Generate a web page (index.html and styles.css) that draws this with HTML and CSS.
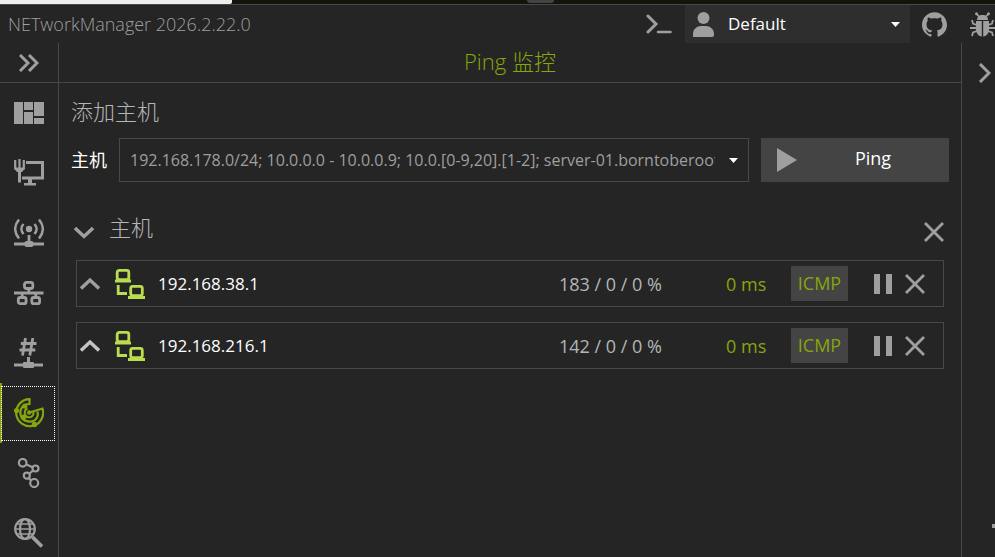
FILE: index.html
```
<!DOCTYPE html>
<html lang="zh-CN">
<head>
  <meta charset="UTF-8">
  <meta name="viewport" content="width=device-width, initial-scale=1.0">
  <title>NETworkManager</title>
  <link rel="stylesheet" href="styles.css">
</head>
<body>
  <div class="desktop-strip">
    <div class="desktop-light"></div>
    <div class="desktop-dark"><span class="desktop-tab"></span></div>
  </div>

  <!-- Title bar -->
  <header class="titlebar">
    <span class="app-title">NETworkManager 2026.2.22.0</span>
    <button type="button" class="icon-btn terminal-btn" aria-label="Terminal">
      <svg width="26" height="20" viewBox="0 0 26 20" fill="none" stroke="currentColor" stroke-width="3" stroke-linecap="round"><path d="M2 2l8 8-8 8" stroke-linejoin="miter"/><path d="M12 18h12.500" stroke-width="2.500"/></svg>
    </button>
    <div class="profile">
      <svg width="22" height="25" viewBox="0 0 22 25" fill="currentColor"><circle cx="10.500" cy="6" r="6"/><path d="M0 25v-3c0-5 4-8 8-8h5c4 0 8 3 8 8v1c0 1-1 2-2 2z"/></svg>
      <select class="profile-select" aria-label="Profile">
        <option>Default</option>
      </select>
      <svg class="profile-caret" width="9" height="5" viewBox="0 0 9 5" fill="#fff"><path d="M0 0h9L4.500 5z"/></svg>
    </div>
    <a href="#" class="icon-btn github-link" aria-label="GitHub">
      <svg width="25" height="25" viewBox="0 0 24 24" fill="currentColor"><path d="M12 .297c-6.630 0-12 5.373-12 12 0 5.303 3.438 9.800 8.205 11.385.6.113.82-.258.82-.577 0-.285-.01-1.040-.015-2.040-3.338.724-4.042-1.610-4.042-1.610C4.422 18.070 3.633 17.700 3.633 17.700c-1.087-.744.084-.729.084-.729 1.205.084 1.838 1.236 1.838 1.236 1.070 1.835 2.809 1.305 3.495.998.108-.776.417-1.305.76-1.605-2.665-.3-5.466-1.332-5.466-5.930 0-1.310.465-2.380 1.235-3.220-.135-.303-.54-1.523.105-3.176 0 0 1.005-.322 3.300 1.230.96-.267 1.980-.399 3-.405 1.020.006 2.040.138 3 .405 2.280-1.552 3.285-1.230 3.285-1.230.645 1.653.24 2.873.12 3.176.765.84 1.230 1.910 1.230 3.220 0 4.610-2.805 5.625-5.475 5.920.42.36.81 1.096.81 2.220 0 1.606-.015 2.896-.015 3.286 0 .315.21.69.825.57C20.565 22.092 24 17.592 24 12.297c0-6.627-5.373-12-12-12"/></svg>
    </a>
    <a href="#" class="icon-btn bug-link" aria-label="Report a bug">
      <svg width="25" height="25" viewBox="0 0 25 25"><g fill="currentColor"><path d="M7 8c0-3 2-5 5.500-5S18 5 18 8z"/><path d="M6 9h5.800v15.500C8 24 6 21 6 17z"/><path d="M19 9h-5.800v15.500C17 24 19 21 19 17z"/><circle cx="6.500" cy="1.800" r="1.500"/><circle cx="18.500" cy="1.800" r="1.500"/></g><path d="M6.500 1.800L9.500 5M18.500 1.800L15.500 5M6.500 13L3 11.500 2 8M18.500 13l3.500-1.500 1-3.500M6 16H0M19 16h6M7 19l-4 1.500L2 24M18 19l4 1.500 1 3.500" fill="none" stroke="currentColor" stroke-width="1.800"/></svg>
    </a>
  </header>

  <div class="window-body">
    <!-- Application list -->
    <nav class="sidebar">
      <button type="button" class="expand-btn" aria-label="Expand">
        <svg width="20" height="18" viewBox="0 0 20 18" fill="none" stroke="currentColor" stroke-width="3"><path d="M1 1l8 8-8 8M10 1l8 8-8 8"/></svg>
      </button>
      <a href="#" class="nav-item" aria-label="Dashboard">
        <svg width="30" height="30" viewBox="0 0 30 30" fill="currentColor"><path d="M0 4h9v22H0zM10 4h9v8h-9zM10 14h9v12h-9zM20 4h10v14H20zM20 20h10v6H20z"/></svg>
      </a>
      <a href="#" class="nav-item" aria-label="Network interface">
        <svg width="30" height="30" viewBox="0 0 30 30" fill="none" stroke="currentColor"><path d="M1.200 2v8.500h8.600V2M5.500 1v9" stroke-width="2.200"/><path d="M0 10.500h11l-3 3.500H3z" fill="currentColor" stroke="none"/><path d="M5.500 12v12.500" stroke-width="3"/><path d="M12 4.500h16.500v15.500H8" stroke-width="3"/><path d="M14 21h4v4h4v2.500H10V25h4z" fill="currentColor" stroke="none"/></svg>
      </a>
      <a href="#" class="nav-item" aria-label="WiFi">
        <svg width="30" height="30" viewBox="0 0 30 30" fill="none" stroke="currentColor" stroke-width="2.600"><circle cx="15" cy="11" r="3.200" fill="currentColor" stroke="none"/><path d="M9.500 6c-2.700 3-2.700 7 0 10M20.500 6c2.700 3 2.700 7 0 10M5 1.500c-5 6-5 13 0 19M25 1.500c5 6 5 13 0 19"/><path d="M15 17V25" stroke-width="2.800"/><path d="M0 26h30" stroke-width="3"/><rect x="10.500" y="23" width="9" height="6" rx="2" fill="currentColor" stroke="none"/></svg>
      </a>
      <a href="#" class="nav-item" aria-label="IP scanner">
        <svg width="30" height="30" viewBox="0 0 30 30" fill="none" stroke="currentColor" stroke-width="2.800"><rect x="10.500" y="4.300" width="8.300" height="6.200" rx="2"/><rect x="4.300" y="19.500" width="7.800" height="6.200" rx="2"/><rect x="17.800" y="19.500" width="7.800" height="6.200" rx="2"/><path d="M0 15h29.500M14.800 11v4M8.200 15V19M21.800 15V19"/></svg>
      </a>
      <a href="#" class="nav-item" aria-label="Port scanner">
        <svg width="30" height="30" viewBox="0 0 30 30" fill="none" stroke="currentColor" stroke-width="2.800"><path d="M11.500 0L8.500 17.500M18.800 0l-3 17.500M6.800 5.500h15.700M5.500 12h15.800"/><path d="M14.500 19v6M0 27h29" stroke-width="3"/><rect x="9" y="24" width="11" height="6" rx="1" fill="currentColor" stroke="none"/></svg>
      </a>
      <a href="#" class="nav-item active" aria-label="Ping monitor">
        <svg width="30" height="30" viewBox="0 0 30 30" fill="none" stroke="currentColor" stroke-width="2.200"><path d="M15.500 7V1.200A13.500 13.500 0 1 0 28.500 10.500L15.500 14.500"/><path d="M15.500 6C8 6 5.500 12 6.500 16.500c1.500 8 13 9.500 16.500 3 1-2 1-4 .5-6"/><path d="M13.500 10.500c-4 1.500-3.500 8 .5 8.700 3 .6 6-1.500 5.500-5.200" stroke-width="2"/><path d="M15.500 7l9-3.500 3.500 7" stroke="none"/><g fill="currentColor" stroke="none"><circle cx="15.200" cy="14.500" r="2.200"/><circle cx="2.500" cy="12.500" r="2.600"/><circle cx="10.800" cy="8" r="2.600"/><circle cx="9.500" cy="19.200" r="2.600"/><circle cx="20.500" cy="26.500" r="2.700"/></g></svg>
      </a>
      <a href="#" class="nav-item" aria-label="Traceroute">
        <svg width="30" height="30" viewBox="0 0 30 30" fill="none" stroke="currentColor" stroke-width="2.200"><circle cx="8.700" cy="4.800" r="3.800"/><circle cx="21.500" cy="10.500" r="3"/><circle cx="12.800" cy="17.700" r="3"/><circle cx="20.200" cy="25" r="4"/><path d="M12.500 6.500l6 2.700M19.200 12.500l-4.200 3.400M14.500 20l2.800 2.600"/></svg>
      </a>
      <a href="#" class="nav-item" aria-label="DNS lookup">
        <svg width="30" height="30" viewBox="0 0 30 30" fill="none" stroke="currentColor" stroke-width="2.200"><circle cx="11" cy="11" r="9.800"/><ellipse cx="11" cy="11" rx="5" ry="10"/><path d="M1 11h20M3 6h16M3 16h16" stroke-width="1.600"/><path d="M18.500 19l9.500 9.500" stroke-width="3.800"/></svg>
      </a>
    </nav>

    <main class="content">
      <h1 class="page-title">Ping 监控</h1>

      <section class="add-host">
        <h2 class="heading">添加主机</h2>
        <form class="host-form">
          <label for="host">主机</label>
          <div class="combo">
            <input type="text" id="host" placeholder="192.168.178.0/24; 10.0.0.0 - 10.0.0.9; 10.0.[0-9,20].[1-2]; server-01.borntoberoot.net">
            <button type="button" class="combo-btn" aria-label="History">
              <svg width="9" height="5" viewBox="0 0 9 5" fill="#fff"><path d="M0 0h9L4.500 5z"/></svg>
            </button>
          </div>
          <button type="button" class="ping-btn">
            <svg width="20" height="24" viewBox="0 0 20 24" fill="#9f9f9f"><path d="M0 0l20 12L0 24z"/></svg>
            <span>Ping</span>
          </button>
        </form>
      </section>

      <section class="hosts">
        <div class="hosts-header">
          <button type="button" class="icon-btn" aria-label="Collapse">
            <svg width="20" height="20" viewBox="0 0 20 20" fill="none" stroke="currentColor" stroke-width="3.400"><path d="M1 6l9 8.500L19 6"/></svg>
          </button>
          <h2 class="heading">主机</h2>
          <button type="button" class="icon-btn" aria-label="Close all">
            <svg width="20" height="20" viewBox="0 0 20 20" fill="none" stroke="currentColor" stroke-width="2.800"><path d="M1 1l18 18M19 1L1 19"/></svg>
          </button>
        </div>

        <div class="host-row">
          <button type="button" class="icon-btn" aria-label="Expand">
            <svg width="20" height="20" viewBox="0 0 20 20" fill="none" stroke="currentColor" stroke-width="3.400"><path d="M1 14.500L10 6l9 8.500"/></svg>
          </button>
          <svg class="host-icon" width="30" height="30" viewBox="0 0 30 30" fill="none" stroke="currentColor" stroke-width="2.800"><rect x="2.200" y="1.400" width="11.600" height="9.200" rx="2"/><path d="M0 12h16M13 28.500h17M3.200 16v8.500H12"/><rect x="15.700" y="17.400" width="11.600" height="9.200" rx="2"/></svg>
          <span class="host-name">192.168.38.1</span>
          <span class="host-stats">183 / 0 / 0 %</span>
          <span class="host-time">0 ms</span>
          <span class="badge">ICMP</span>
          <button type="button" class="icon-btn pause-btn" aria-label="Pause">
            <svg width="18" height="20" viewBox="0 0 18 20" fill="currentColor"><path d="M0 0h6v20H0zM12 0h6v20h-6z"/></svg>
          </button>
          <button type="button" class="icon-btn" aria-label="Close">
            <svg width="20" height="20" viewBox="0 0 20 20" fill="none" stroke="currentColor" stroke-width="2.800"><path d="M1 1l18 18M19 1L1 19"/></svg>
          </button>
        </div>

        <div class="host-row">
          <button type="button" class="icon-btn light" aria-label="Expand">
            <svg width="20" height="20" viewBox="0 0 20 20" fill="none" stroke="currentColor" stroke-width="3.400"><path d="M1 14.500L10 6l9 8.500"/></svg>
          </button>
          <svg class="host-icon" width="30" height="30" viewBox="0 0 30 30" fill="none" stroke="currentColor" stroke-width="2.800"><rect x="2.200" y="1.400" width="11.600" height="9.200" rx="2"/><path d="M0 12h16M13 28.500h17M3.200 16v8.500H12"/><rect x="15.700" y="17.400" width="11.600" height="9.200" rx="2"/></svg>
          <span class="host-name">192.168.216.1</span>
          <span class="host-stats">142 / 0 / 0 %</span>
          <span class="host-time">0 ms</span>
          <span class="badge">ICMP</span>
          <button type="button" class="icon-btn pause-btn" aria-label="Pause">
            <svg width="18" height="20" viewBox="0 0 18 20" fill="currentColor"><path d="M0 0h6v20H0zM12 0h6v20h-6z"/></svg>
          </button>
          <button type="button" class="icon-btn" aria-label="Close">
            <svg width="20" height="20" viewBox="0 0 20 20" fill="none" stroke="currentColor" stroke-width="2.800"><path d="M1 1l18 18M19 1L1 19"/></svg>
          </button>
        </div>
      </section>
    </main>

    <!-- Collapsed profile panel -->
    <aside class="side-panel">
      <button type="button" class="icon-btn" aria-label="Show profiles">
        <svg width="13" height="20" viewBox="0 0 13 20" fill="none" stroke="currentColor" stroke-width="3"><path d="M2 1l9 9-9 9"/></svg>
      </button>
      <span class="panel-mark"></span>
    </aside>
  </div>
</body>
</html>
```

FILE: styles.css
```
* {
  box-sizing: border-box;
}

body {
  margin: 0;
  height: 100vh;
  display: flex;
  flex-direction: column;
  overflow: hidden;
  background: #252525;
  color: #fff;
  font-family: "Open Sans", "Noto Sans CJK SC", sans-serif;
  font-size: 17px;
}

button,
input,
select {
  font: inherit;
  color: inherit;
  margin: 0;
  padding: 0;
  border: none;
  border-radius: 0;
  background: none;
}

svg {
  display: block;
  flex-shrink: 0;
}

.desktop-strip {
  display: flex;
  height: 5px;
  flex-shrink: 0;
  background: #14140c;
  border-bottom: 1px solid #484848;
}

.desktop-light {
  width: 232px;
  background: #eee;
  border-bottom-right-radius: 2px;
}

.desktop-dark {
  flex: 1;
  padding-left: 295px;
}

.desktop-tab {
  display: block;
  width: 27px;
  height: 3px;
  background: #444;
  border-radius: 0 0 4px 4px;
}

/* Title bar */
.titlebar {
  display: flex;
  align-items: center;
  height: 38px;
  flex-shrink: 0;
  color: #9f9f9f;
}

.app-title {
  flex: 1;
  padding-left: 8px;
  font-size: 18px;
  font-weight: 300;
}

.icon-btn {
  display: flex;
  align-items: center;
  justify-content: center;
  color: #9f9f9f;
}

.icon-btn.light {
  color: #c4c4c4;
}

.terminal-btn {
  margin-right: 13px;
}

.profile {
  position: relative;
  display: flex;
  align-items: center;
  width: 225px;
  height: 38px;
  padding-left: 8px;
  background: #2e2e2e;
}

.profile svg {
  color: #9f9f9f;
}

.profile-select {
  flex: 1;
  height: 38px;
  padding: 0 0 2px 13px;
  color: #fff;
  appearance: none;
}

.profile-caret {
  position: absolute;
  right: 10px;
  top: 17px;
  pointer-events: none;
}

.github-link {
  margin: 0 23px 0 12px;
}

/* Main area */
.window-body {
  display: flex;
  flex: 1;
  min-height: 0;
}

.sidebar {
  width: 59px;
  flex-shrink: 0;
  border-right: 1px solid #484848;
}

.expand-btn {
  display: flex;
  align-items: center;
  justify-content: center;
  width: 100%;
  height: 40px;
  border-bottom: 1px solid #484848;
  color: #9f9f9f;
}

.nav-item {
  display: flex;
  align-items: center;
  height: 60px;
  padding-left: 14px;
  color: #9f9f9f;
}

.nav-item.active {
  position: relative;
  color: #86a60e;
  border-left: 2px solid #86a60e;
  padding-left: 12px;
}

.nav-item.active::after {
  content: "";
  position: absolute;
  top: 3px;
  right: 3px;
  bottom: 2px;
  left: -1px;
  border: 1px dotted #fff;
}

.content {
  flex: 1;
  min-width: 0;
}

.page-title {
  margin: 0;
  height: 40px;
  border-bottom: 1px solid #484848;
  color: #86a60e;
  font-size: 22px;
  font-weight: 300;
  line-height: 36px;
  text-align: center;
}

.heading {
  margin: 0;
  color: #b5b5b5;
  font-size: 22px;
  font-weight: 300;
  line-height: 32px;
}

.add-host {
  padding: 12px;
}

.host-form {
  display: flex;
  align-items: center;
  gap: 12px;
  margin-top: 11px;
}

.host-form label {
  padding-bottom: 2px;
  font-size: 18px;
}

.combo {
  display: flex;
  flex: 1;
  height: 44px;
  padding-left: 10px;
  border: 1px solid #484848;
}

.combo input {
  flex: 1;
  min-width: 0;
  font-size: 16px;
  outline: none;
}

.combo input::placeholder {
  color: #9f9f9f;
}

.combo-btn {
  display: flex;
  align-items: center;
  justify-content: center;
  width: 33px;
  padding-left: 4px;
}

.ping-btn {
  display: flex;
  align-items: center;
  width: 188px;
  height: 44px;
  padding-left: 16px;
  background: #444;
}

.ping-btn span {
  flex: 1;
  padding-bottom: 4px;
  font-size: 18px;
  text-align: center;
}

/* Host list */
.hosts {
  padding: 17px 17px 0;
}

.hosts-header {
  display: flex;
  align-items: center;
  height: 32px;
  margin: 0 0 17px -2px;
}

.hosts-header .heading {
  flex: 1;
  padding-left: 15px;
}

.hosts-header .icon-btn {
  padding-top: 10px;
}

.host-row {
  display: grid;
  grid-template-columns: 35px 43px 1fr 167px 65px 57px 57px 20px;
  align-items: center;
  height: 47px;
  margin-bottom: 15px;
  padding: 0 18px 0 3px;
  border: 1px solid #484848;
}

.host-row .icon-btn {
  justify-content: flex-start;
}

.host-row .pause-btn {
  padding-left: 26px;
}

.host-icon {
  color: #badd4f;
}

.host-stats,
.host-time,
.badge {
  font-size: 18px;
}

.host-stats {
  color: #b5b5b5;
}

.host-time {
  color: #86a60e;
}

.badge {
  height: 35px;
  background: #444;
  color: #86a60e;
  line-height: 34px;
  text-align: center;
}

.side-panel {
  display: flex;
  flex-direction: column;
  justify-content: space-between;
  align-items: flex-end;
  width: 34px;
  flex-shrink: 0;
  padding: 20px 0 29px;
  border-left: 1px solid #484848;
}

.side-panel .icon-btn {
  padding-right: 4px;
}

.panel-mark {
  width: 3px;
  height: 4px;
  background: #9f9f9f;
}
```
